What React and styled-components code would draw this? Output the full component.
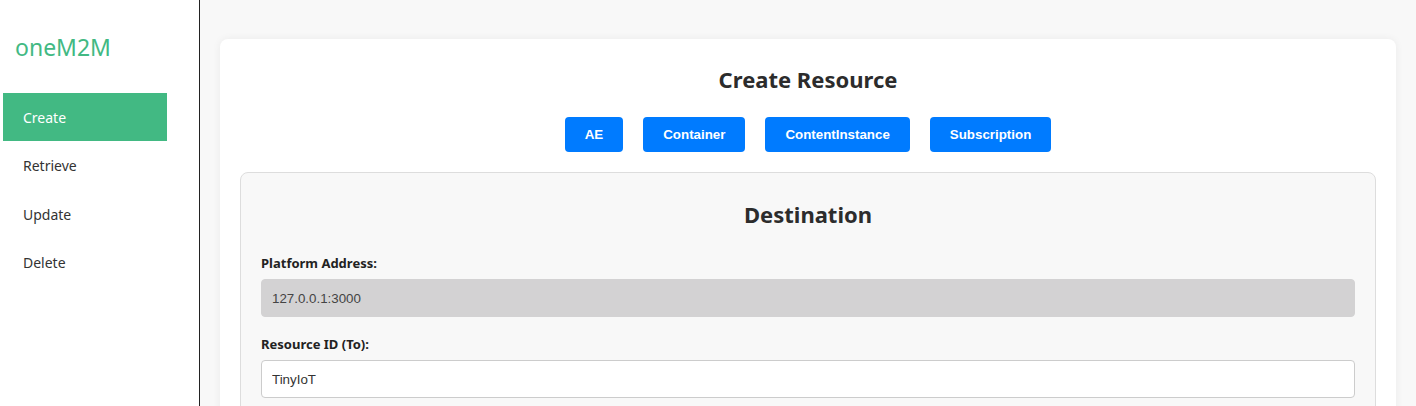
import styled, { createGlobalStyle } from "styled-components";

const GlobalStyle = createGlobalStyle`
  body {
    margin: 0;
    font-family: "Noto Sans", "Open Sans", sans-serif;
    background: #f8f8f8;
    color: #333;
  }
`;

const Layout = styled.div`
  display: flex;
  min-height: 100vh;
`;

const Sidebar = styled.nav`
  width: 199px;
  flex-shrink: 0;
  background: #fff;
  border-right: 1px solid #222;
  padding-top: 28px;
  box-sizing: content-box;
`;

const Logo = styled.div`
  color: #42b983;
  font-size: 23px;
  padding-left: 15px;
  height: 38px;
  line-height: 38px;
  margin-bottom: 27px;
`;

const NavList = styled.ul`
  list-style: none;
  margin: 0;
  padding: 0 32px 0 3px;
`;

const NavItem = styled.li`
  height: 48.3px;
  line-height: 50px;
  padding-left: 20px;
  font-size: 14px;
  color: ${(p) => (p.$active ? "#fff" : "#333")};
  background: ${(p) => (p.$active ? "#42b983" : "transparent")};
`;

const Main = styled.main`
  flex: 1;
  padding: 39px 20px 20px;
`;

const Card = styled.section`
  background: #fff;
  border-radius: 8px;
  box-shadow: 0 0 8px rgba(0, 0, 0, 0.06);
  padding: 20px;
`;

const Title = styled.h2`
  margin: 7px 0 25px;
  text-align: center;
  font-size: 22px;
  font-weight: 700;
  color: #2c2c2c;
  line-height: 26px;
`;

const TypeRow = styled.div`
  display: flex;
  justify-content: center;
  gap: 20px;
  margin-bottom: 20px;
`;

const TypeButton = styled.button`
  height: 35px;
  padding: 0 20px;
  border: none;
  border-radius: 4px;
  background: #007bff;
  color: #fff;
  font-family: "Liberation Sans", Arial, sans-serif;
  font-size: 13.33px;
  font-weight: 700;
`;

const Section = styled.div`
  background: #f8f8f8;
  border: 1px solid #ddd;
  border-radius: 8px;
  padding: 20px;
`;

const SectionTitle = styled.h3`
  margin: 8px 0 27px;
  text-align: center;
  font-size: 22px;
  font-weight: 700;
  color: #2c2c2c;
  line-height: 26px;
`;

const Field = styled.div`
  margin-bottom: 18px;
`;

const Label = styled.label`
  display: block;
  font-size: 13px;
  font-weight: 700;
  color: #222;
  margin-bottom: 7px;
`;

const Input = styled.input`
  display: block;
  width: 100%;
  box-sizing: border-box;
  height: 38px;
  padding: 0 10px;
  border: 1px solid #ccc;
  border-radius: 4px;
  font-family: "Liberation Sans", Arial, sans-serif;
  font-size: 13.33px;
  color: #333;
  background: #fff;

  &:disabled {
    background: #d3d2d3;
    border-color: #d3d2d3;
    color: #444;
  }
`;

const navItems = ["Create", "Retrieve", "Update", "Delete"];
const types = ["AE", "Container", "ContentInstance", "Subscription"];

export default function App() {
  return (
    <>
      <GlobalStyle />
      <Layout>
        <Sidebar>
          <Logo>oneM2M</Logo>
          <NavList>
            {navItems.map((n) => (
              <NavItem key={n} $active={n === "Create"}>
                {n}
              </NavItem>
            ))}
          </NavList>
        </Sidebar>
        <Main>
          <Card>
            <Title>Create Resource</Title>
            <TypeRow>
              {types.map((t) => (
                <TypeButton key={t}>{t}</TypeButton>
              ))}
            </TypeRow>
            <Section>
              <SectionTitle>Destination</SectionTitle>
              <Field>
                <Label>Platform Address:</Label>
                <Input value="127.0.0.1:3000" disabled readOnly />
              </Field>
              <Field>
                <Label>Resource ID (To):</Label>
                <Input defaultValue="TinyIoT" />
              </Field>
            </Section>
          </Card>
        </Main>
      </Layout>
    </>
  );
}
